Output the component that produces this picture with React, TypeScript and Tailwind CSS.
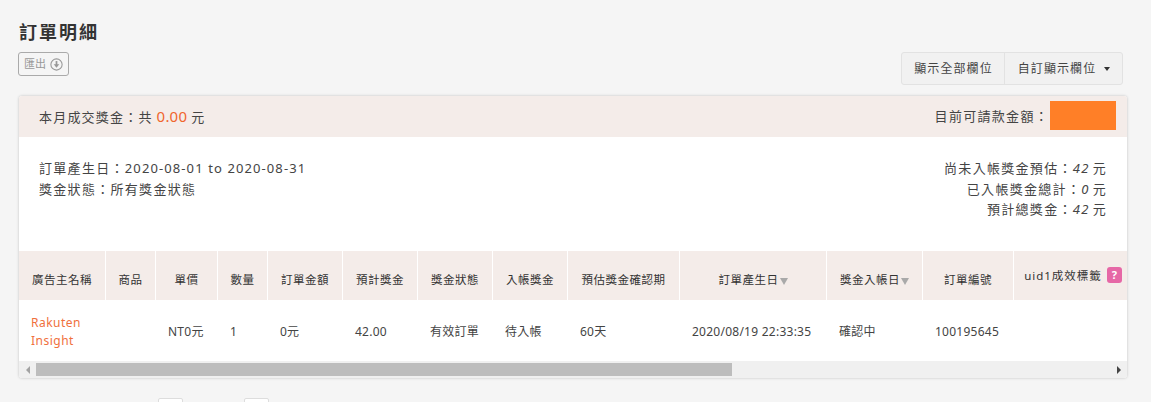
const font = { fontFamily: '"Noto Sans", "Noto Sans CJK TC", sans-serif' };

const cols = "grid-cols-[87px_50px_62px_50px_75px_75px_75px_75px_112px_147px_96px_91px_113px]";

function Caret() {
  return <span className="ml-px inline-block h-0 w-0 translate-y-px border-x-[4.5px] border-t-[7px] border-x-transparent border-t-[#a9a9a9]" />;
}

const heads: [string, boolean?][] = [
  ["廣告主名稱"], ["商品"], ["單價"], ["數量"], ["訂單金額"], ["預計獎金"], ["獎金狀態"], ["入帳獎金"], ["預估獎金確認期"],
  ["訂單產生日", true], ["獎金入帳日", true], ["訂單編號"],
];

const cells = ["", "", "NT0元", "1", "0元", "42.00", "有效訂單", "待入帳", "60天", "2020/08/19 22:33:35", "確認中", "100195645", ""];

export default function App() {
  return (
    <div style={font} className="h-[402px] w-[1151px] overflow-hidden bg-[#f5f5f5] text-[#333]">
      <div className="pl-[19px] pr-6 pt-[20px]">
        <h1 className="h-[24px] text-[18px] font-bold leading-[24px] tracking-[2px] text-[#333]">訂單明細</h1>
        <div className="mt-[8px] flex items-start justify-between">
          <button className="-ml-px flex h-[24px] w-[51px] items-center justify-center gap-[4px] rounded-[3px] border border-[#aaa] bg-[#f5f5f5] text-[11px] text-[#999]">
            <span>匯出</span>
            <svg width="13" height="13" viewBox="0 0 12 12" fill="none" stroke="#999" strokeWidth="1">
              <circle cx="6" cy="6" r="5.2" />
              <path d="M6 2.8v4.4" strokeWidth="1.6" />
              <path d="M3.4 5.8 6 9 8.6 5.8z" fill="#999" stroke="none" />
            </svg>
          </button>
          <div className="mr-[4px] flex h-[33px] items-stretch rounded-[3px] border border-[#e2e2e2] bg-[#f1f1f1] text-[12px] tracking-[1.1px] text-[#444]">
            <div className="flex w-[103px] items-center justify-center border-r border-[#e2e2e2] pl-px">顯示全部欄位</div>
            <div className="flex w-[117px] items-center justify-center gap-2 pl-px">
              <span>自訂顯示欄位</span>
              <span className="inline-block h-0 w-0 border-x-[3.5px] border-t-[4px] border-x-transparent border-t-[#333]" />
            </div>
          </div>
        </div>
        <div className="mt-[11px] w-[1108px] overflow-hidden rounded-[3px] bg-white shadow-[0_0_3px_rgba(0,0,0,0.22)]">
          <div className="flex h-[41px] items-center justify-between bg-[#f4ece9] pl-[20px] pr-[11px] text-[13px] tracking-[1.2px]">
            <div className="flex items-baseline text-[#444]">
              <span>本月成交獎金：共</span>
              <span className="ml-[4px] text-[15px] tracking-[0.2px] text-[#f0662d]">0.00</span>
              <span className="ml-[4px]">元</span>
            </div>
            <div className="flex items-center gap-[1px] text-[#444]">
              <span className="tracking-[1.3px]">目前可請款金額：</span>
              <span className="mb-[2px] h-[29px] w-[66px] bg-[#ff7f27]" />
            </div>
          </div>
          <div className="flex h-[114px] justify-between pl-[20px] pr-[20px] pt-[21px] text-[13px] leading-[20.5px] tracking-[1.3px] text-[#444]">
            <div>
              <div>訂單產生日：<span className="tracking-[1.1px]">2020-08-01 to 2020-08-31</span></div>
              <div>獎金狀態：所有獎金狀態</div>
            </div>
            <div className="text-right">
              <div>尚未入帳獎金預估：<i className="mr-[3px]">42</i>元</div>
              <div>已入帳獎金總計：<i className="mr-[3px]">0</i>元</div>
              <div>預計總獎金：<i className="mr-[3px]">42</i>元</div>
            </div>
          </div>
          <div className={`grid h-[49px] ${cols} bg-[#f4ece9] text-[11.5px] tracking-[0.5px] text-[#333]`}>
            {heads.map(([h, sort]) => (
              <div key={h} className="flex items-center justify-center border-r border-white pt-[9px]">
                {h}
                {sort && <Caret />}
              </div>
            ))}
            <div className="flex items-start justify-center gap-[5px] pl-[5px] pt-[16px]">
              <span className="text-[11.5px] leading-[17px] tracking-[1px]">uid1成效標籤</span>
              <span className="flex h-[16px] w-[15px] items-center justify-center rounded-[3px] bg-[#e667a6] text-[11px] font-bold tracking-normal text-white">?</span>
            </div>
          </div>
          <div className={`grid h-[61px] ${cols} items-center pt-[2px] text-[12px] tracking-[0.25px] text-[#444]`}>
            <div className="pl-[12px] leading-[18px] tracking-[0.5px] text-[#f0703c]">Rakuten<br />Insight</div>
            {cells.slice(1).map((c, i) => (
              <div key={i} className="whitespace-nowrap pl-[12px]">{c}</div>
            ))}
          </div>
          <div className="flex h-[17px] items-center bg-[#f0f0f0]">
            <div className="flex w-[17px] justify-center">
              <span className="h-0 w-0 border-y-[4px] border-r-[4px] border-y-transparent border-r-[#a3a3a3]" />
            </div>
            <div className="h-[13px] w-[696px] bg-[#bdbdbd]" />
            <div className="flex-1" />
            <div className="flex w-[17px] justify-center">
              <span className="h-0 w-0 border-y-[4px] border-l-[4px] border-y-transparent border-l-[#444]" />
            </div>
          </div>
        </div>
        <div className="mt-[20px] flex pl-[139px]">
          <div className="h-[24px] w-[25px] rounded-[2px] border border-[#ddd] bg-white" />
          <div className="ml-[61px] h-[24px] w-[25px] rounded-[2px] border border-[#ddd] bg-white" />
        </div>
      </div>
    </div>
  );
}
